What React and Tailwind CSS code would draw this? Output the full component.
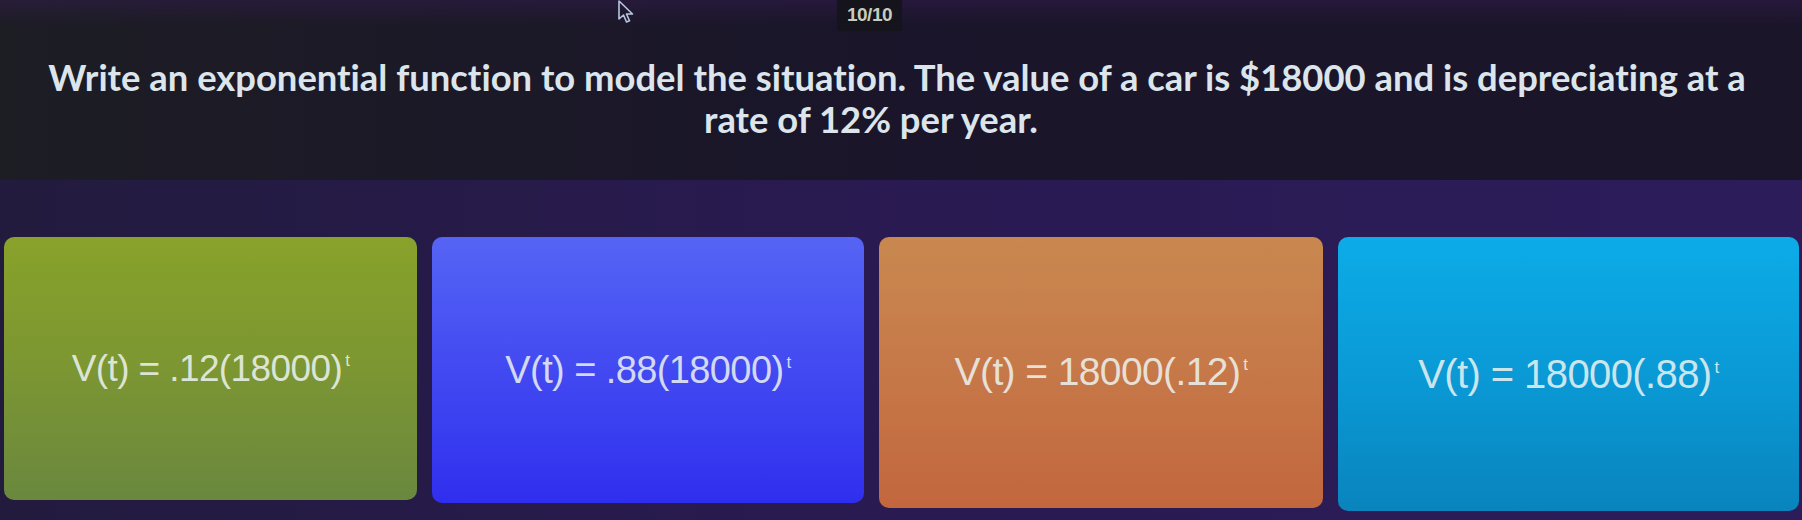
import React from "react";

const cards = [
  { w: "w-[413px]", h: "h-[263px]", fs: "text-[37px]", bg: "bg-gradient-to-b from-[#88a22a] via-[#7c9632] to-[#6a883e]", a: ".12(18000)" },
  { w: "w-[432px]", h: "h-[266px]", fs: "text-[38px]", bg: "bg-gradient-to-b from-[#5664f5] via-[#4249f1] to-[#302eee]", a: ".88(18000)" },
  { w: "w-[444px]", h: "h-[271px]", fs: "text-[39px]", bg: "bg-gradient-to-b from-[#c98850] via-[#c67848] to-[#c2663e]", a: "18000(.12)" },
  { w: "w-[461px]", h: "h-[274px]", fs: "text-[40px]", bg: "bg-gradient-to-b from-[#0cace8] via-[#0a9ad6] to-[#0984bd]", a: "18000(.88)" },
];

export default function App() {
  return (
    <div
      className="w-[1802px] h-[520px] overflow-hidden bg-gradient-to-r from-[#221b3e] via-[#2a1a52] to-[#2c1c5a]"
      style={{ fontFamily: "Lato, 'Noto Sans', sans-serif" }}
    >
      <div className="relative h-[180px] bg-[linear-gradient(to_bottom,rgba(52,28,80,0.45),rgba(0,0,0,0)_14%),linear-gradient(to_right,#1d1d24,#1a152a_50%,#1b1529)]">
        <div className="pl-[837px]">
          <div className="w-[65px] h-[31px] bg-[#15131b] flex items-center justify-center">
            <span className="text-[19px] font-bold text-[#c7cdbd] tracking-[-0.5px]" style={{ fontFamily: "'Liberation Sans', Arial, sans-serif" }}>
              10/10
            </span>
          </div>
        </div>
        <div className="mt-[25px] text-[36.4px] leading-[42px] font-bold text-[#dce5ec] [font-variant-ligatures:none]">
          <div className="text-center whitespace-nowrap pr-[8px]">
            Write an exponential function to model the situation. The value of a car is $18000 and is depreciating at a
          </div>
          <div className="text-center whitespace-nowrap pr-[60px]">rate of 12% per year.</div>
        </div>
        <svg className="absolute left-[617px] top-0" width="20" height="25" viewBox="0 0 20 25">
          <path d="M2 1 L2 19 L6.5 15 L9.5 22 L12.5 20.8 L9.5 14 L15.5 14 Z" fill="#1e1a30" stroke="#b9c6e0" strokeWidth="1.6" strokeLinejoin="round" />
        </svg>
      </div>
      <div className="flex items-start gap-[15px] pl-[4px] mt-[57px]">
        {cards.map((c, i) => (
          <div key={i} className={`${c.w} ${c.h} rounded-[10px] ${c.bg} flex items-center justify-center`}>
            <span
              className={`${c.fs} text-[#eef4f2]/85 tracking-[-0.6px] whitespace-nowrap`}
              style={{ fontFamily: "'Liberation Sans', Arial, sans-serif" }}
            >
              V(t) = {c.a}
              <span className="relative top-[-15px] ml-[3px] text-[17px]">t</span>
            </span>
          </div>
        ))}
      </div>
    </div>
  );
}
